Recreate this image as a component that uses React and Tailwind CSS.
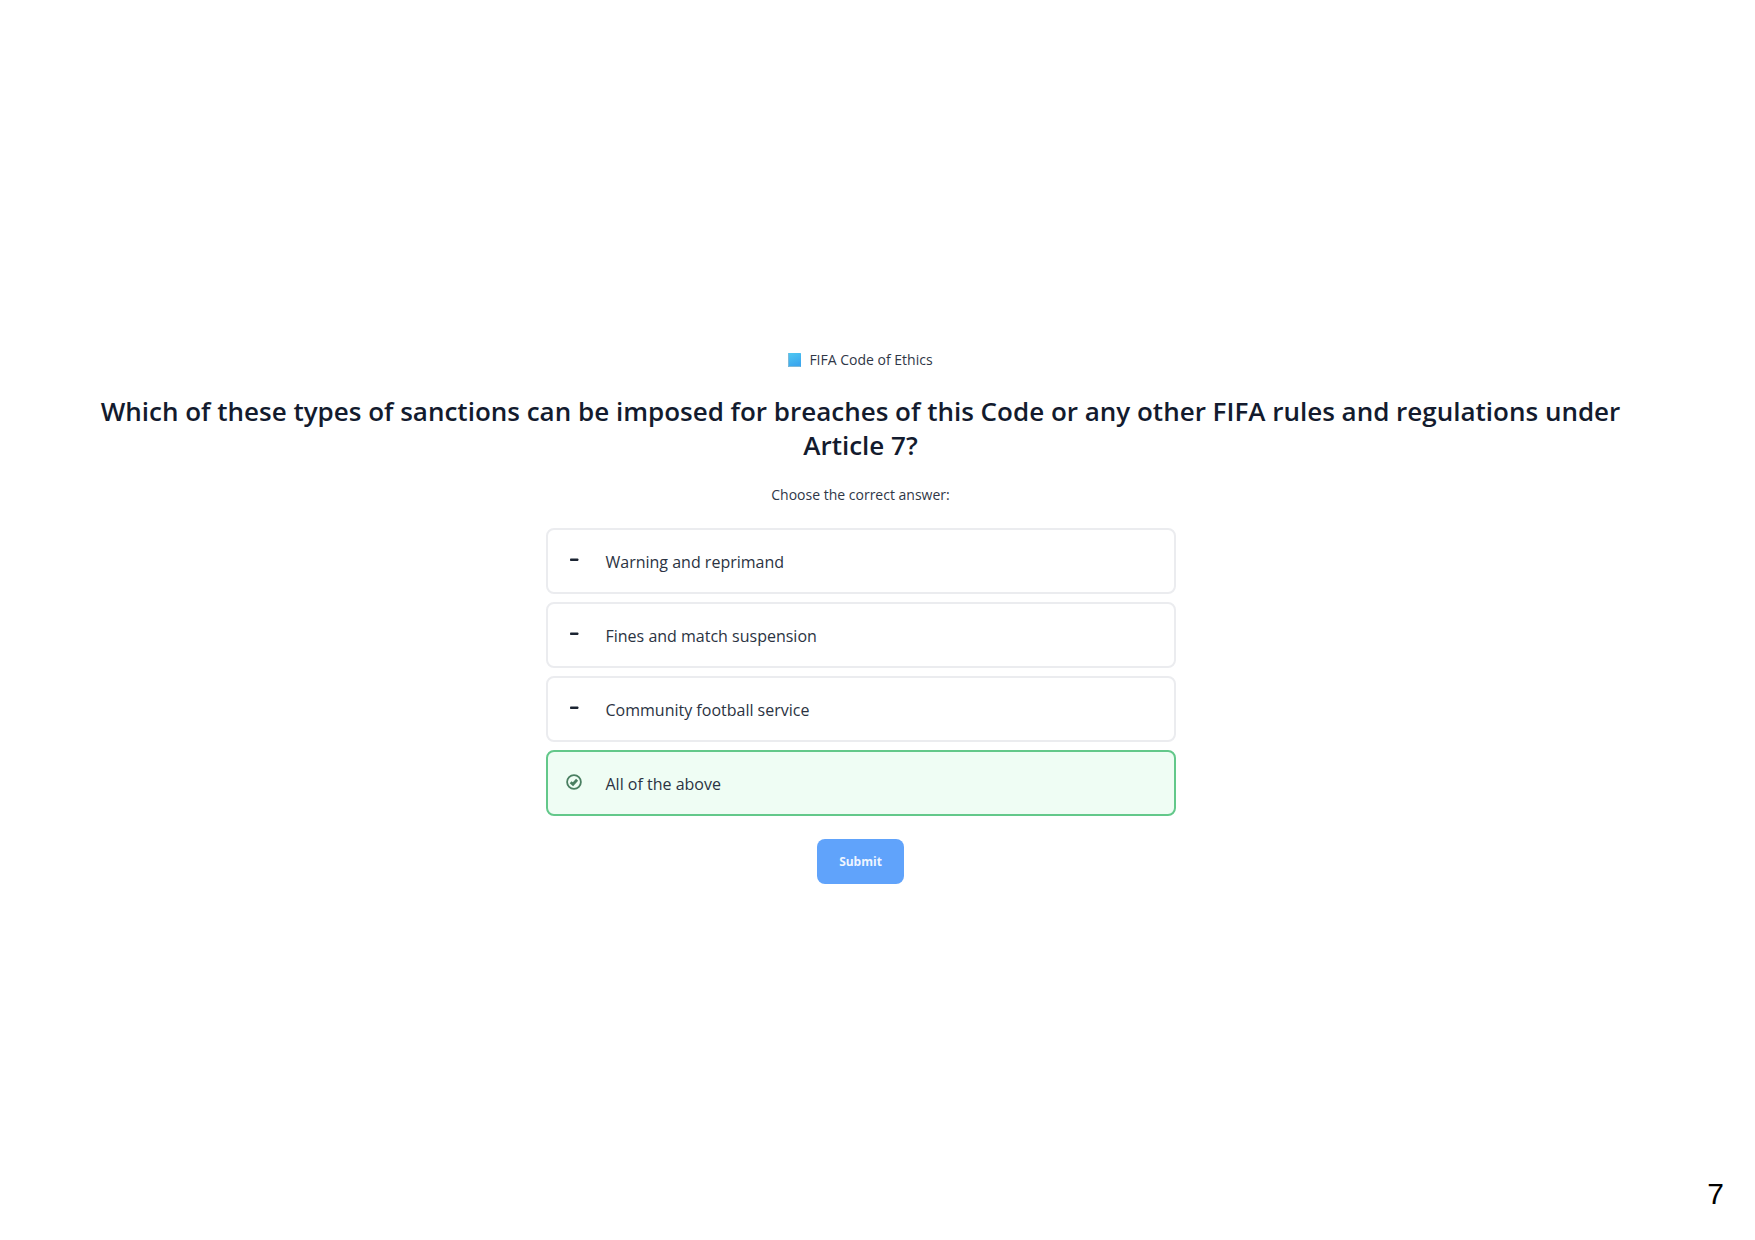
import { useState } from "react";

const options = [
  "Warning and reprimand",
  "Fines and match suspension",
  "Community football service",
  "All of the above",
];

function BookIcon() {
  return (
    <svg className="h-[14px] w-[13px]" viewBox="0 0 13 14" aria-hidden="true">
      <defs>
        <linearGradient id="cover" x1="0" y1="0" x2="0.4" y2="1">
          <stop offset="0" stopColor="#4fc9f2" />
          <stop offset="1" stopColor="#3ba6ee" />
        </linearGradient>
      </defs>
      <rect width="13" height="14" rx="0.5" fill="url(#cover)" />
      <path d="M0.5 0.5v13M0.5 13.5h12" stroke="#7fb9d8" strokeWidth="1" fill="none" />
    </svg>
  );
}

function DashIcon() {
  return (
    <svg className="size-4" viewBox="0 0 16 16" aria-hidden="true">
      <rect x="4" y="6.5" width="8.4" height="2.6" rx="0.8" fill="#1b2432" />
    </svg>
  );
}

function CheckIcon() {
  return (
    <svg className="size-4" viewBox="0 0 16 16" fill="none" stroke="#4a7f61" aria-hidden="true">
      <circle cx="8" cy="8" r="6.9" strokeWidth="1.8" />
      <path d="M4.6 8.2l2.4 2.1 4.1-4.5" strokeWidth="2.8" />
    </svg>
  );
}

function Option({ text, checked, onSelect }) {
  return (
    <label
      className={
        checked
          ? "flex h-[66px] cursor-pointer items-center gap-6 rounded-lg border-2 border-[#63c88a] bg-[#effdf4] px-[18px]"
          : "flex h-[66px] cursor-pointer items-center gap-6 rounded-lg border-2 border-[#ebecef] bg-white px-[18px]"
      }
    >
      <input type="radio" name="answer" className="sr-only" checked={checked} onChange={onSelect} />
      <span className="pb-0.5">{checked ? <CheckIcon /> : <DashIcon />}</span>
      <span className="pt-0.5 text-base leading-6 text-[#2b3342]">{text}</span>
    </label>
  );
}

export default function App() {
  const [selected, setSelected] = useState(3);
  return (
    <div className="flex min-h-screen flex-col bg-white font-['Open_Sans','Noto_Sans',sans-serif]">
      <main className="flex flex-1 flex-col items-center pt-[349px] pr-[34px]">
        <p className="flex items-center gap-2 text-sm leading-[22px] text-[#2f3747]">
          <BookIcon />
          FIFA Code of Ethics
        </p>
        <h1 className="mt-[23px] max-w-[1540px] text-center text-[26px] leading-[34px] font-semibold text-[#131b2e]">
          Which of these types of sanctions can be imposed for breaches of this Code or any other FIFA rules and
          regulations under Article 7?
        </h1>
        <p className="mt-[22px] text-sm leading-[22px] text-[#2f3747]" id="prompt">
          Choose the correct answer:
        </p>
        <form className="mt-[22px] flex w-full max-w-[630px] flex-col items-center" onSubmit={(e) => e.preventDefault()}>
          <div className="flex w-full flex-col gap-2" role="radiogroup" aria-labelledby="prompt">
            {options.map((text, i) => (
              <Option key={text} text={text} checked={selected === i} onSelect={() => setSelected(i)} />
            ))}
          </div>
          <button
            type="submit"
            className="mt-[23px] h-[45px] rounded-lg bg-[#60a3fb] px-[22px] text-xs font-bold text-[#eef5ff]"
          >
            Submit
          </button>
        </form>
      </main>
      <footer className="flex justify-end pr-[31px] pb-[30px] font-['Liberation_Sans',sans-serif] text-[30px] leading-8 text-black">
        7
      </footer>
    </div>
  );
}
